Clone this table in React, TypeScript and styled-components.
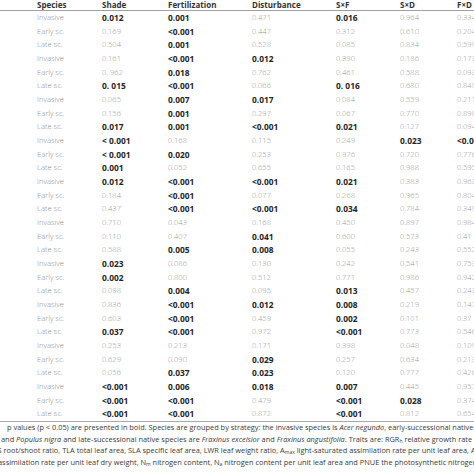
import React from 'react';
import styled, { createGlobalStyle } from 'styled-components';

const GlobalStyle = createGlobalStyle`
  html, body {
    margin: 0;
    padding: 0;
    background: #ffffff;
    overflow: hidden;
  }
  body {
    font-family: "Open Sans", "Noto Sans", sans-serif;
  }
`;

type Cell = string;
// a leading "*" marks a bold (significant) value
const rows: [string, Cell[]][] = [
  ['Invasive', ['*0.012', '*0.001', '0.471', '*0.016', '0.964', '0.334']],
  ['Early sc.', ['0.169', '*<0.001', '0.447', '0.312', '0.610', '0.204']],
  ['Late sc.', ['0.504', '*0.001', '0.528', '0.085', '0.834', '0.599']],
  ['Invasive', ['0.161', '*<0.001', '*0.012', '0.390', '0.186', '0.173']],
  ['Early sc.', ['0. 962', '*0.018', '0.762', '0.461', '0.588', '0.093']],
  ['Late sc.', ['*0. 015', '*<0.001', '0.066', '*0. 016', '0.680', '0.849']],
  ['Invasive', ['0.065', '*0.007', '*0.017', '0.084', '0.559', '0.211']],
  ['Early sc.', ['0.156', '*0.001', '0.297', '0.067', '0.770', '0.898']],
  ['Late sc.', ['*0.017', '*0.001', '*<0.001', '*0.021', '0.127', '0.094']],
  ['Invasive', ['*< 0.001', '0.168', '0.115', '0.249', '*0.023', '*<0.001']],
  ['Early sc.', ['*< 0.001', '*0.020', '0.253', '0.976', '0.720', '0.776']],
  ['Late sc.', ['*0.001', '0.052', '0.655', '0.165', '0.988', '0.595']],
  ['Invasive', ['*0.012', '*<0.001', '*<0.001', '*0.021', '0.383', '0.963']],
  ['Early sc.', ['0.184', '*<0.001', '0.077', '0.268', '0.965', '0.804']],
  ['Late sc.', ['0.437', '*<0.001', '*<0.001', '*0.034', '0.784', '0.349']],
  ['Invasive', ['0.710', '0.043', '0.168', '0.450', '0.897', '0.984']],
  ['Early sc.', ['0.110', '0.407', '*0.041', '0.600', '0.573', '0.41']],
  ['Late sc.', ['0.588', '*0.005', '*0.008', '0.055', '0.243', '0.552']],
  ['Invasive', ['*0.023', '0.086', '0.130', '0.242', '0.541', '0.753']],
  ['Early sc.', ['*0.002', '0.800', '0.512', '0.771', '0.986', '0.942']],
  ['Late sc.', ['0.098', '*0.004', '0.095', '*0.013', '0.457', '0.243']],
  ['Invasive', ['0.836', '*<0.001', '*0.012', '*0.008', '0.219', '0.147']],
  ['Early sc.', ['0.603', '*<0.001', '0.459', '*0.002', '0.101', '0.37']],
  ['Late sc.', ['*0.037', '*<0.001', '0.972', '*<0.001', '0.773', '0.546']],
  ['Invasive', ['0.253', '0.213', '0.171', '0.398', '0.048', '0.109']],
  ['Early sc.', ['0.629', '0.090', '*0.029', '0.257', '0.634', '0.213']],
  ['Late sc.', ['0.056', '*0.037', '*0.023', '0.120', '0.777', '0.426']],
  ['Invasive', ['*<0.001', '*0.006', '*0.018', '*0.007', '0.445', '0.957']],
  ['Early sc.', ['*<0.001', '*<0.001', '0.479', '*<0.001', '*0.028', '0.374']],
  ['Late sc.', ['*<0.001', '*<0.001', '0.872', '*<0.001', '0.812', '0.654']],
];

const headers = ['Species', 'Shade', 'Fertilization', 'Disturbance', 'S×F', 'S×D', 'F×D'];

const Page = styled.div`
  width: 474px;
  height: 474px;
  overflow: hidden;
`;

const Table = styled.div`
  width: 540px;
  border-bottom: 1px solid #a8a8a8;
`;

const Row = styled.div<{ $head?: boolean }>`
  display: grid;
  grid-template-columns: 102px 66px 84px 84px 64px 57px 83px;
  height: ${(p) => (p.$head ? '10px' : '13.68px')};
  line-height: ${(p) => (p.$head ? '10px' : '13.68px')};
  border-bottom: ${(p) => (p.$head ? '1.5px solid #a0a0a0' : 'none')};
`;

const HeadCell = styled.div<{ $first?: boolean }>`
  padding-left: ${(p) => (p.$first ? '37px' : '0')};
  font-size: 8px;
  font-weight: 700;
  color: #333333;
  white-space: nowrap;
`;

const Label = styled.div`
  padding-left: 37px;
  font-size: 7.6px;
  font-weight: 300;
  color: #8c8c8c;
  white-space: nowrap;
`;

const Value = styled.div<{ $bold: boolean }>`
  font-size: ${(p) => (p.$bold ? '8.4px' : '7.5px')};
  font-weight: ${(p) => (p.$bold ? 700 : 300)};
  color: ${(p) => (p.$bold ? '#262626' : '#969696')};
  white-space: nowrap;
`;

const Notes = styled.div`
  font-size: 7.4px;
  line-height: 11.6px;
  color: #3a3a3a;
`;

const NoteLine = styled.div<{ $shift?: number }>`
  white-space: nowrap;
  margin-left: ${(p) => p.$shift ?? 0}px;

  sub {
    font-size: 5px;
    vertical-align: -1px;
    line-height: 0;
  }
`;

export default function App() {
  return (
    <>
      <GlobalStyle />
      <Page>
        <Table>
          <Row $head>
            {headers.map((h, i) => (
              <HeadCell key={h} $first={i === 0}>
                {h}
              </HeadCell>
            ))}
          </Row>
          {rows.map(([label, cells], r) => (
            <Row key={r}>
              <Label>{label}</Label>
              {cells.map((c, i) => {
                const bold = c.startsWith('*');
                return (
                  <Value key={i} $bold={bold}>
                    {bold ? c.slice(1) : c}
                  </Value>
                );
              })}
            </Row>
          ))}
        </Table>
        <Notes>
          <NoteLine $shift={7}>
            p values (p &lt; 0.05) are presented in bold. Species are grouped by strategy: the invasive species is{' '}
            <i>Acer negundo</i>, early-successional native species are <i>Betula pendula</i>
          </NoteLine>
          <NoteLine $shift={1}>
            and <i>Populus nigra</i> and late-successional native species are <i>Fraxinus excelsior</i> and{' '}
            <i>Fraxinus angustifolia</i>. Traits are: RGR<sub>h</sub> relative growth rate in height
          </NoteLine>
          <NoteLine $shift={-9}>
            R:S root/shoot ratio, TLA total leaf area, SLA specific leaf area, LWR leaf weight ratio, A<sub>max</sub>{' '}
            light-saturated assimilation rate per unit leaf area, A<sub>mass</sub> light-saturated
          </NoteLine>
          <NoteLine $shift={-2}>
            assimilation rate per unit leaf dry weight, N<sub>m</sub> nitrogen content, N<sub>a</sub> nitrogen content
            per unit leaf area and PNUE the photosynthetic nitrogen use efficiency
          </NoteLine>
        </Notes>
      </Page>
    </>
  );
}
